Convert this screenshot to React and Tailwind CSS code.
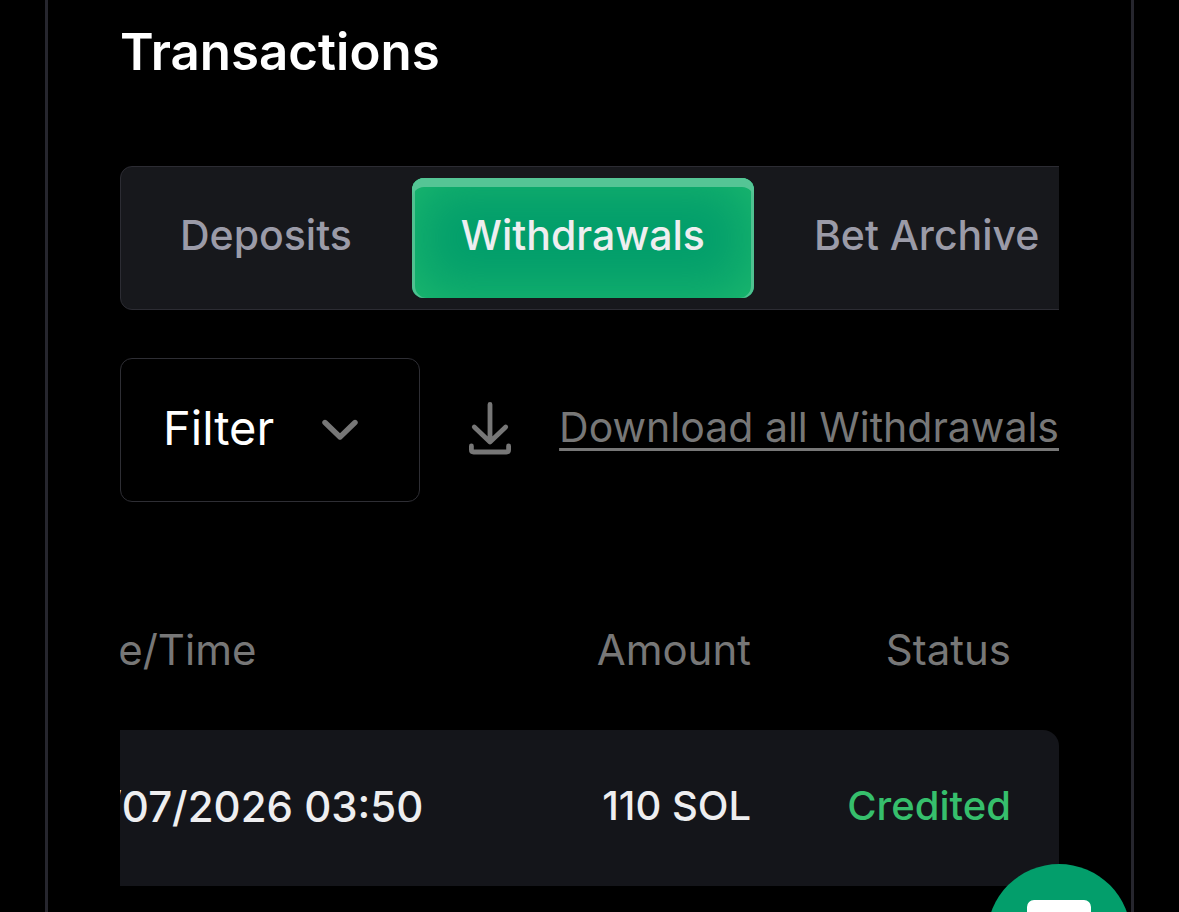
const TABS = ['Deposits', 'Withdrawals', 'Bet Archive'];

const ROWS = [
    { date: '12/07/2026 03:50', amount: '110 SOL', status: 'Credited' },
];

function ChevronIcon() {
    return (
        <svg width="36" height="22" viewBox="0 0 36 22" fill="none" stroke="#777777" strokeWidth="5.4"
            strokeLinecap="round" strokeLinejoin="round" aria-hidden="true">
            <path d="M3 3.5 18 18 33 3.5" />
        </svg>
    );
}

function DownloadIcon() {
    return (
        <svg className="shrink-0" width="42" height="54" viewBox="0 0 42 54" fill="none" stroke="#777777"
            strokeLinecap="round" strokeLinejoin="round" aria-hidden="true">
            <path strokeWidth="4.8" d="M21 3.4v37.6M5.3 26 21 41 36.7 26" />
            <path strokeWidth="4.8" d="M2.4 45v3.8q0 2.2 2.2 2.2h32.8q2.2 0 2.2-2.2v-3.8" />
        </svg>
    );
}

function ChatButton() {
    return (
        <button type="button" aria-label="Chat"
            className="fixed right-12 -bottom-24 flex size-36 items-start justify-center rounded-full bg-[#039e6b] pt-9">
            <svg width="64" height="72" viewBox="0 0 64 72" fill="#ffffff" aria-hidden="true">
                <path d="M7 0h50a7 7 0 0 1 7 7v42a7 7 0 0 1-7 7H44L32 70 20 56H7a7 7 0 0 1-7-7V7a7 7 0 0 1 7-7z" />
            </svg>
        </button>
    );
}

function Tab({ label, active }) {
    return (
        <button type="button" role="tab" aria-selected={active}
            className={active
                ? 'h-30 min-w-[342px] shrink-0 rounded-xl px-12 pb-1 bg-[#039e6b] text-[#eeeef0] shadow-[inset_0_9px_0_0_#55c595,inset_3px_0_0_0_#4fc190,inset_-3px_0_0_0_#4fc190,inset_0_0_60px_0_#20bc6e]'
                : 'h-30 shrink-0 rounded-xl px-12 pb-1 text-[#9b9ba8]'}>
            {label}
        </button>
    );
}

export default function App() {
    return (
        <div className="min-h-screen bg-black px-[45px] font-['Inter',sans-serif]">
            <main className="min-h-screen border-x-3 border-[#26262e] px-18 pt-3">
                <h1 className="mb-[74px] text-[51px] leading-20 font-semibold text-white">Transactions</h1>

                <div className="overflow-hidden">
                    <div role="tablist"
                        className="flex w-max gap-3 rounded-xl border border-[#2c2c33] bg-[#17181c] p-[11px] text-[41px] font-medium">
                        {TABS.map((t) => <Tab key={t} label={t} active={t === 'Withdrawals'} />)}
                    </div>
                </div>

                <div className="mt-12 flex items-center justify-between">
                    <button type="button"
                        className="flex h-36 w-75 shrink-0 items-center gap-12 rounded-xl border border-[#2e2e34] px-[42px] text-[47px] text-white">
                        <span className="pb-1">Filter</span>
                        <ChevronIcon />
                    </button>
                    <a href="#download"
                        className="flex items-center gap-12 pb-1 text-[41px] whitespace-nowrap text-[#777777]">
                        <DownloadIcon />
                        <span className="underline decoration-3 underline-offset-[6px]">Download all Withdrawals</span>
                    </a>
                </div>

                {/* Table is wider than the panel, scrolled to its right end */}
                <div className="mt-17 flex justify-end overflow-hidden">
                    <table className="shrink-0 text-[40px] whitespace-nowrap">
                        <thead>
                            <tr className="h-40 text-[42px] text-[#777777]">
                                <th className="w-[500px] pb-0.5 pl-[50px] text-left font-normal">Date/Time</th>
                                <th className="w-[250px] pb-0.5 text-right font-normal">Amount</th>
                                <th className="w-[308px] pr-12 pb-0.5 text-right font-normal">Status</th>
                            </tr>
                        </thead>
                        <tbody>
                            {ROWS.map((r) => (
                                <tr key={r.date} className="h-39 font-medium text-[#eeeef0]">
                                    <td className="bg-[#14151a] pb-1 pl-[62px] text-[42px]">{r.date}</td>
                                    <td className="bg-[#14151a] pb-1 text-right">{r.amount}</td>
                                    <td className="rounded-tr-2xl bg-[#14151a] pr-12 pb-1 text-right text-[#36bf6c]">{r.status}</td>
                                </tr>
                            ))}
                        </tbody>
                    </table>
                </div>
            </main>
            <ChatButton />
        </div>
    );
}
